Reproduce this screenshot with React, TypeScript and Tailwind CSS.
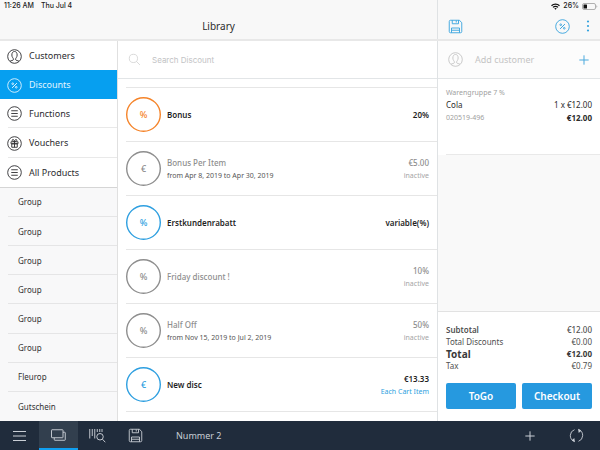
import React from "react";

type IconProps = { className?: string };

function Glyph({ size = 15, className = "", children }: { size?: number; className?: string; children: React.ReactNode }) {
  return (
    <svg
      width={size}
      height={size}
      viewBox="0 0 30 30"
      fill="none"
      stroke="currentColor"
      strokeWidth="1.8"
      className={`shrink-0 ${className}`}
      aria-hidden="true"
    >
      {children}
    </svg>
  );
}

const CustomerIcon = ({ className }: IconProps) => (
  <Glyph className={className}>
    <circle cx="15" cy="15" r="13.6" />
    <path d="M6 24.500c2-1.500 7-1 7-4 0-2-3.300-4-3.300-8.500C9.700 7.500 11.800 5 15 5s5.300 2.500 5.300 7c0 4.500-3.300 6.500-3.300 8.500 0 3 5 2.500 7 4" />
  </Glyph>
);

const PercentIcon = ({ className }: IconProps) => (
  <Glyph className={className}>
    <circle cx="15" cy="15" r="13.6" />
    <path d="M19.800 10.200l-9.600 9.600" strokeWidth="2" />
    <circle cx="11.500" cy="11.500" r="1.700" />
    <circle cx="18.500" cy="18.500" r="1.700" />
  </Glyph>
);

const ListIcon = ({ className }: IconProps) => (
  <Glyph className={className}>
    <circle cx="15" cy="15" r="13.6" />
    <path d="M8.500 9.500h13M8.500 15h13M8.500 20.500h13" />
  </Glyph>
);

const GiftIcon = ({ className }: IconProps) => (
  <Glyph className={className}>
    <circle cx="15" cy="15" r="13.6" />
    <path d="M8 11.500h14v4H8zM9.500 15.500h11v7h-11zM15 11.500v11" />
    <path d="M15 11c-4 0-5-1.500-4.500-3.200C11.300 5.800 14.500 7 15 11c.5-4 3.700-5.200 4.500-3.200C20 9.500 19 11 15 11z" />
  </Glyph>
);

const SaveIcon = ({ className }: IconProps) => (
  <Glyph className={className}>
    <path d="M5 2.500h18l4.500 5V25a2.500 2.500 0 0 1-2.500 2.500H5A2.500 2.500 0 0 1 2.500 25V5A2.500 2.500 0 0 1 5 2.500z" />
    <path d="M8.500 2.500v7h12.500v-7M16.500 3v4M7 27.500V18h16v9.500M7 22.500h16" />
  </Glyph>
);

const SearchIcon = ({ className }: IconProps) => (
  <Glyph size={13} className={className}>
    <circle cx="12.500" cy="12.500" r="9.500" />
    <path d="M19.500 19.500l8 8" />
  </Glyph>
);

const PlusIcon = ({ className }: IconProps) => (
  <Glyph size={10} className={className}>
    <path d="M15 1v28M1 15h28" strokeWidth="3" />
  </Glyph>
);

const sections = [
  { label: "Customers", Icon: CustomerIcon },
  { label: "Discounts", Icon: PercentIcon },
  { label: "Functions", Icon: ListIcon },
  { label: "Vouchers", Icon: GiftIcon },
  { label: "All Products", Icon: ListIcon },
];

const groups = ["Group", "Group", "Group", "Group", "Group", "Group", "Fleurop", "Gutschein"];

type Tone = "orange" | "blue" | "gray";

const circleTone: Record<Tone, string> = {
  orange: "text-[#f5842a]",
  blue: "text-[#2e9fe0]",
  gray: "text-[#8e8e8e]",
};

const discounts: { symbol: string; tone: Tone; name: string; period?: string; value: string; note?: string }[] = [
  { symbol: "%", tone: "orange", name: "Bonus", value: "20%" },
  { symbol: "€", tone: "gray", name: "Bonus Per Item", period: "from Apr 8, 2019 to Apr 30, 2019", value: "€5.00", note: "inactive" },
  { symbol: "%", tone: "blue", name: "Erstkundenrabatt", value: "variable(%)" },
  { symbol: "%", tone: "gray", name: "Friday discount !", value: "10%", note: "inactive" },
  { symbol: "%", tone: "gray", name: "Half Off", period: "from Nov 15, 2019 to Jul 2, 2019", value: "50%", note: "inactive" },
  { symbol: "€", tone: "blue", name: "New disc", value: "€13.33", note: "Each Cart Item" },
];

function Header() {
  return (
    <header className="flex h-[41px] shrink-0 border-b-2 border-[#e8e8e8] bg-[#f8f8f8]">
      <div className="flex min-w-0 flex-1 flex-col">
        <div className="flex h-3 items-center gap-[7px] pl-1 font-['Inter',sans-serif] text-[7px] font-medium text-[#222]">
          <span>11:26 AM</span>
          <span>Thu Jul 4</span>
        </div>
        <h1 className="flex flex-1 items-center justify-center pt-[2px] text-[10px] text-[#2b2b2b]">Library</h1>
      </div>
      <div className="flex w-[163px] shrink-0 flex-col border-l border-[#dfe2e4]">
        <div className="flex h-3 items-center justify-end gap-[3px] pr-[2px] font-['Inter',sans-serif] text-[7px] font-medium text-[#222]">
          <svg width="9" height="7" viewBox="0 0 18 14" fill="none" stroke="#111" strokeWidth="2.600" aria-hidden="true">
            <path d="M1 5.500a11.500 11.500 0 0 1 16 0M4 8.800a7 7 0 0 1 10 0" />
            <path d="M6.500 11a4 4 0 0 1 5 0L9 13.500z" fill="#111" stroke="none" />
          </svg>
          <span>26%</span>
          <svg width="16" height="7" viewBox="0 0 32 14" aria-hidden="true">
            <rect x="1" y="1" width="26" height="12" rx="3" fill="none" stroke="#999" strokeWidth="1.500" />
            <rect x="3" y="3" width="7" height="8" rx="1" fill="#111" />
            <path d="M29 4.500c2 .8 2 4.200 0 5z" fill="#999" />
          </svg>
        </div>
        <div className="flex flex-1 items-center pt-px pr-[10px] pl-[10px] text-[#35a3de]">
          <button type="button" aria-label="Save cart"><SaveIcon /></button>
          <button type="button" aria-label="Cart discount" className="ml-auto"><PercentIcon /></button>
          <button type="button" aria-label="More" className="ml-4">
            <svg width="4" height="12" viewBox="0 0 4 12" fill="currentColor" aria-hidden="true">
              <circle cx="2" cy="1.500" r="1.100" />
              <circle cx="2" cy="6" r="1.100" />
              <circle cx="2" cy="10.500" r="1.100" />
            </svg>
          </button>
        </div>
      </div>
    </header>
  );
}

function Sidebar() {
  return (
    <nav className="flex w-[118px] shrink-0 flex-col border-r border-[#e0e0e0] bg-[#f8f8f9]">
      {sections.map(({ label, Icon }, i) => (
        <button
          key={label}
          type="button"
          className={`flex min-h-0 flex-1 pl-2 text-left text-[9px] ${i === 1 ? "bg-[#069ff0] text-[#e2f4ff]" : "bg-white text-[#2c2c30]"} ${
            i === 4 ? "border-b border-[#d5d5d5]" : ""
          }`}
        >
          <span className={`flex h-full flex-1 items-center pt-px ${i === 2 || i === 3 ? "border-b border-[#e9e9e9]" : ""}`}>
            <Icon className="-ml-px mr-[7px]" />
            {label}
          </span>
        </button>
      ))}
      {groups.map((name, i) => (
        <button key={i} type="button" className="flex min-h-0 flex-1 pl-2 text-left text-[8px] text-[#333]">
          <span className={`flex h-full flex-1 items-center pt-px pl-[10px] ${i < groups.length - 1 ? "border-b border-[#e5e5e6]" : ""}`}>{name}</span>
        </button>
      ))}
    </nav>
  );
}

function DiscountList() {
  return (
    <main className="flex min-w-0 flex-1 flex-col overflow-hidden bg-white">
      <label className="flex h-[38px] shrink-0 items-center gap-[11px] border-b border-[#e2e5e7] pl-[10px] text-[#cfcfcf]">
        <SearchIcon />
        <input
          type="search"
          aria-label="Search Discount"
          placeholder="Search Discount"
          className="min-w-0 flex-1 bg-transparent font-['Inter',sans-serif] text-[8px] outline-none placeholder:text-[#c2c3c5]"
        />
      </label>
      <div className="pt-2 pl-2">
        <ul className="border-t border-[#e6e6e6]">
          {discounts.map((d) => {
            const muted = d.tone === "gray";
            return (
              <li key={d.name} className="flex h-[54px] items-center gap-[6px] border-b border-[#e6e6e6] pr-2">
                <span className={`grid shrink-0 place-items-center text-[9px] font-medium ${circleTone[d.tone]}`}>
                  <svg width="35" height="35" viewBox="0 0 35 35" fill="none" stroke="currentColor" className="col-start-1 row-start-1" aria-hidden="true">
                    <circle cx="17.500" cy="17.500" r="16.800" strokeWidth="1.400" />
                  </svg>
                  <span className="col-start-1 row-start-1">{d.symbol}</span>
                </span>
                <span className="flex min-w-0 flex-1 flex-col">
                  <span className={`text-[8px] leading-[13px] ${muted ? "font-medium text-[#8e8e8e]" : "font-semibold text-[#1f1f1f]"}`}>{d.name}</span>
                  {d.period && <span className="text-[7px] leading-[13px] text-[#555]">{d.period}</span>}
                </span>
                <span className="flex flex-col text-right">
                  <span className={`text-[8px] leading-[13px] ${muted ? "font-medium text-[#8e8e8e]" : "font-semibold text-[#1f1f1f]"}`}>{d.value}</span>
                  {d.note && <span className={`text-[7px] leading-[13px] ${muted ? "text-[#a5a5a5]" : "text-[#2e9fe0]"}`}>{d.note}</span>}
                </span>
              </li>
            );
          })}
        </ul>
      </div>
    </main>
  );
}

function Cart() {
  return (
    <aside className="flex w-[163px] shrink-0 flex-col border-l border-[#dfe2e4] bg-[#f9f9f9]">
      <button
        type="button"
        className="flex h-[38px] shrink-0 items-center gap-3 border-b border-[#e2e5e7] bg-[#fcfcfc] pr-[11px] pl-[10px] text-[9px] text-[#c4c4c4]"
      >
        <CustomerIcon />
        <span className="flex-1 text-left">Add customer</span>
        <PlusIcon className="text-[#4aa9dd]" />
      </button>
      <section className="flex h-[76px] shrink-0 flex-col bg-white pl-2">
        <div className="flex-1 border-b border-[#e9e9e9] pt-2 pr-2 text-[8px] leading-[13px] text-[#2b2b2b]">
          <div className="text-[7px] leading-3 text-[#a0a0a0]">Warengruppe 7 %</div>
          <div className="flex justify-between leading-3">
            <span>Cola</span>
            <span>1 x €12.00</span>
          </div>
          <div className="flex justify-between">
            <span className="text-[7px] text-[#a0a0a0]">020519-496</span>
            <span className="font-bold">€12.00</span>
          </div>
        </div>
      </section>
      <section className="mt-auto border-t border-[#e2e2e2] bg-white px-2 pt-3 pb-3">
        <dl className="text-[8px] leading-3 text-[#505050]">
          <div className="flex justify-between"><dt className="font-semibold">Subtotal</dt><dd className="font-medium">€12.00</dd></div>
          <div className="flex justify-between"><dt>Total Discounts</dt><dd>€0.00</dd></div>
          <div className="flex justify-between font-bold text-[#3a3a3a]"><dt className="text-[10px]">Total</dt><dd>€12.00</dd></div>
          <div className="flex justify-between"><dt>Tax</dt><dd>€0.79</dd></div>
        </dl>
        <div className="mt-[11px] grid grid-cols-2 gap-[6px] text-[10px] font-semibold text-white">
          <button type="button" className="h-[26px] rounded-[2px] bg-[#2699df]">ToGo</button>
          <button type="button" className="h-[26px] rounded-[2px] bg-[#2699df]">Checkout</button>
        </div>
      </section>
    </aside>
  );
}

function BottomBar() {
  return (
    <footer className="flex h-[29px] shrink-0 items-stretch bg-[#202c3c] text-[#c9ced5]">
      <button type="button" aria-label="Menu" className="flex w-[39px] items-center justify-center">
        <svg width="13" height="10" viewBox="0 0 13 10" stroke="currentColor" aria-hidden="true">
          <path d="M0 .5h13M0 5h13M0 9.500h13" />
        </svg>
      </button>
      <button type="button" aria-label="Library" className="flex w-[39px] items-center justify-center border-b-2 border-[#109ff0] bg-[#323f4e] pt-px">
        <svg width="15" height="12" viewBox="0 0 30 24" fill="none" stroke="currentColor" strokeWidth="1.900" aria-hidden="true">
          <rect x="1" y="1.500" width="23" height="16" rx="1" />
          <path d="M24 6.500h3.500a1 1 0 0 1 1 1v14a1 1 0 0 1-1 1H7.500a1 1 0 0 1-1-1v-4" />
        </svg>
      </button>
      <button type="button" aria-label="Scan barcode" className="flex w-[38px] items-center justify-center">
        <svg width="17" height="15" viewBox="0 0 34 30" fill="none" stroke="currentColor" strokeWidth="1.900" aria-hidden="true">
          <path d="M1.500 2v19M6.500 2v14M11.500 2v19M16.500 2v6M21.500 2v6M26 2v6" />
          <circle cx="22" cy="17.500" r="6.500" />
          <path d="M27 22.500l5.500 6" />
        </svg>
      </button>
      <button type="button" aria-label="Save" className="flex w-[39px] items-center justify-center">
        <SaveIcon />
      </button>
      <span className="flex flex-1 items-center pl-[21px] text-[9px]">Nummer 2</span>
      <button type="button" aria-label="Add" className="flex w-[46px] items-center justify-center"><PlusIcon /></button>
      <button type="button" aria-label="Sync" className="flex w-[47px] items-center justify-center">
        <Glyph>
          <path d="M10 26.300A12.300 12.300 0 0 1 11 3.400M20 3.700a12.300 12.300 0 0 1-1 22.900" />
          <path d="M18 1.500l6.500 3.500-5 5zM12 28.500L5.500 25l5-5z" fill="currentColor" stroke="none" />
        </Glyph>
      </button>
    </footer>
  );
}

export default function App() {
  return (
    <div className="flex h-screen flex-col overflow-hidden bg-white font-['Noto_Sans',sans-serif]">
      <Header />
      <div className="flex min-h-0 flex-1">
        <Sidebar />
        <DiscountList />
        <Cart />
      </div>
      <BottomBar />
    </div>
  );
}
